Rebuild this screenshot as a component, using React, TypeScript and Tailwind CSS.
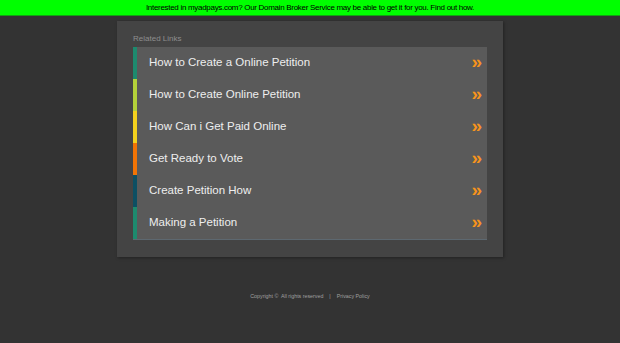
const links = [
  { label: 'How to Create a Online Petition', bar: 'bg-[#1d8a6e]' },
  { label: 'How to Create Online Petition', bar: 'bg-[#b4d23a]' },
  { label: 'How Can i Get Paid Online', bar: 'bg-[#f4d21e]' },
  { label: 'Get Ready to Vote', bar: 'bg-[#f27405]' },
  { label: 'Create Petition How', bar: 'bg-[#0d4f63]' },
  { label: 'Making a Petition', bar: 'bg-[#1d8a6e]' },
];

const App = () => {
  return (
    <div className="min-h-[343px] bg-[#333333] font-['Liberation_Sans',Arial,sans-serif]">
      <div className="h-[16px] bg-[#00ff00] border-b border-[#14a014] flex items-center justify-center">
        <span className="text-[8px] tracking-[-0.3px] text-black">
          Interested in myadpays.com? Our Domain Broker Service may be able to get it for you. Find out how.
        </span>
      </div>

      <div className="mx-auto mt-[5px] w-[386px] h-[236px] bg-[#444444] shadow-[1px_1px_3px_rgba(0,0,0,0.35)] px-[16px] pt-[13px]">
        <div className="text-[8px] text-[#8e8e8e] leading-[10px] mb-[3px]">Related Links</div>
        <ul className="border-b border-[#5d6870]">
          {links.map((link) => (
            <li key={link.label} className="flex h-[32px] bg-[#5a5a5a]">
              <div className={`w-[4px] ${link.bar}`} />
              <div className="flex flex-1 items-center justify-between pl-[12px] pr-[5px]">
                <span className="text-[11.5px] text-[#eeeeee]">{link.label}</span>
                <span className="text-[19px] font-bold text-[#f7941d] leading-none -mt-[3px]">»</span>
              </div>
            </li>
          ))}
        </ul>
      </div>

      <div className="mt-[36px] flex justify-center gap-[6px] text-[5.3px] text-[#a0a0a0]">
        <span>Copyright ©&nbsp; All rights reserved</span>
        <span>|</span>
        <span>Privacy Policy</span>
      </div>
    </div>
  );
};

export default App;
